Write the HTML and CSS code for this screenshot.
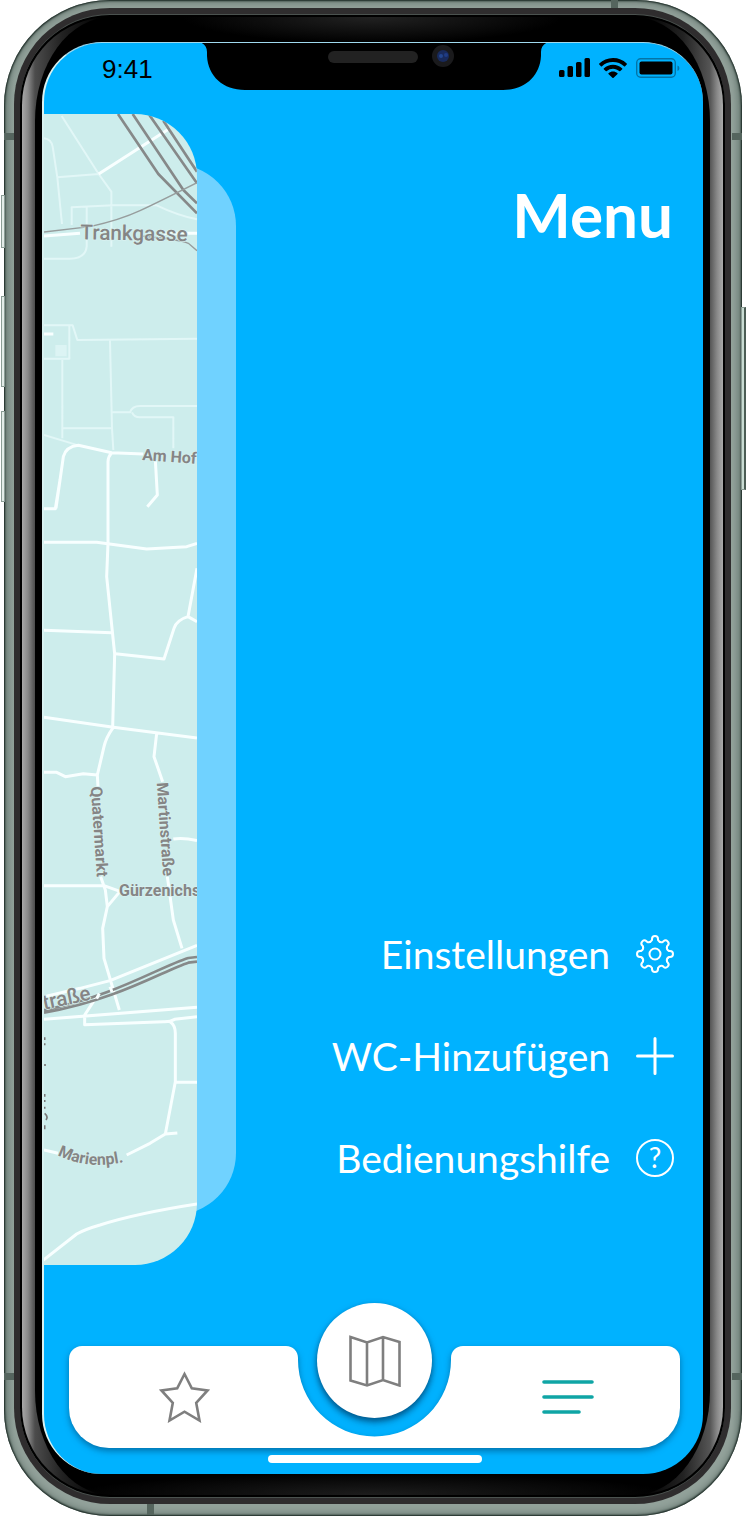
FILE: index.html
```html
<!DOCTYPE html>
<html lang="de">
<head>
<meta charset="utf-8">
<meta name="viewport" content="width=device-width, initial-scale=1">
<title>Menu</title>
<link rel="stylesheet" href="styles.css">
</head>
<body>
<div class="phone">
  <span class="key key-mute"></span>
  <span class="key key-up"></span>
  <span class="key key-down"></span>
  <span class="key key-power"></span>
  <span class="band band-top"></span>
  <span class="band band-bottom"></span>
  <span class="band band-side band-left-high"></span>
  <span class="band band-side band-left-low"></span>
  <span class="band band-side band-right-high"></span>
  <span class="band band-side band-right-low"></span>
  <div class="rim">
    <div class="glass">
      <div class="sheen">
        <div class="bezel">
          <div class="screen">
            <header class="status">
              <time class="clock">9:41</time>
              <svg class="notch" viewBox="0 0 354 48" aria-hidden="true">
                <path d="M0 0C6 0 10 4 10 10V14C11 34 26 48 48 48H306C328 48 343 34 344 14V10C344 4 348 0 354 0Z" fill="#000"/>
                <rect x="131" y="9" width="90" height="12" rx="6" fill="#222"/>
                <circle cx="246" cy="14" r="11" fill="#1a1a1c"/>
                <circle cx="246" cy="14" r="6" fill="#182a5c"/>
                <circle cx="244" cy="14" r="2" fill="#23468f"/>
                <circle cx="249" cy="13" r="2" fill="#1f3c85"/>
              </svg>
              <div class="signals">
                <svg width="31" height="20" viewBox="0 0 31 20" aria-hidden="true"><rect x="0" y="12" width="5.500" height="7" rx="1.500"/><rect x="8.500" y="8" width="5.500" height="11" rx="1.500"/><rect x="17" y="4" width="5.500" height="15" rx="1.500"/><rect x="25.500" y="0" width="5.500" height="19" rx="1.500"/></svg>
                <svg width="28" height="20" viewBox="0 0 28 20" aria-hidden="true"><path d="M14 0C8.600 0 3.800 2.100.3 5.500a.8.800 0 0 0 0 1.100l1.600 1.600a.8.800 0 0 0 1.100 0A15.800 15.800 0 0 1 14 4c4.300 0 8.200 1.600 11 4.200a.8.800 0 0 0 1.100 0l1.600-1.600a.8.800 0 0 0 0-1.100A19.600 19.600 0 0 0 14 0ZM14 6.800c-3.500 0-6.600 1.300-9 3.500a.8.800 0 0 0 0 1.200l1.700 1.600a.8.800 0 0 0 1.100 0A9.300 9.300 0 0 1 14 10.700c2.400 0 4.600.9 6.200 2.400a.8.800 0 0 0 1.100 0l1.700-1.600a.8.800 0 0 0 0-1.200c-2.400-2.200-5.500-3.500-9-3.500ZM14 13.500c-1.700 0-3.200.6-4.300 1.600a.8.800 0 0 0 0 1.200l3.700 3.400a.9.900 0 0 0 1.200 0l3.700-3.400a.8.800 0 0 0 0-1.200c-1.100-1-2.600-1.600-4.300-1.600Z"/></svg>
                <svg width="44" height="20" viewBox="0 0 44 20" aria-hidden="true"><rect x=".7" y=".7" width="38.600" height="18.600" rx="4" fill="none" stroke="#0474a6" stroke-width="1.400"/><rect x="3.500" y="3.500" width="33" height="13" rx="2"/><path d="M41.500 7.500c2.500.8 2.500 4.700 0 5.500Z" fill="#0474a6"/></svg>
              </div>
            </header>

            <main class="content">
              <div class="peek">
                <div class="layer"></div>
                <svg class="map" viewBox="42 42 459 3453" role="img" aria-label="Stadtplan">
                  <g class="lane">
                    <path d="M95 48L206 222L244 275V440M82 232L206 222M42 115Q64 118 68 140L82 232L96 372M125 375V322L250 316H380Q440 345 501 358M170 320V440Q166 476 120 476H42M42 676H128L142 720L501 716M118 676V776H42M97 780V1015M240 722L246 985L250 1050M100 985H246M246 937H300Q306 918 330 918H501M306 937Q312 952 330 952H430V1045M42 1005L145 1036"/>
                  </g>
                  <rect class="block" x="76" y="735" width="34" height="34"/>
                  <g class="road">
                    <path d="M206 222L420 85M42 408L150 400M400 400H501M42 702H70M78 1225L100 1070Q108 1040 145 1036L245 1058L340 1062M245 1058Q234 1070 234 1085V1330L230 1430L254 1662L248 1880M376 1080L382 1185L352 1220M42 1226H76L90 1140"/>
                    <g transform="translate(0 1140)">
                      <path d="M42 187H200L350 207L470 200L501 190M501 265L474 410Q440 420 432 445L402 537L256 521M474 410L501 425M42 451L245 458M42 712L250 742L501 774M250 742Q228 772 222 800L202 885L204 920M42 877H80L106 890L160 881L202 885M380 760L372 830L398 905M430 1077Q460 1072 501 1082"/>
                    </g>
                    <g transform="translate(0 2280)">
                      <path d="M42 77H222L270 94L232 140L218 205L222 295L268 450M212 50L226 90L232 140M412 50L430 180L456 265M42 410L150 385L240 362L501 256M42 478L501 442M200 410L164 465V494L400 485Q420 486 434 478L501 470M420 485Q436 495 436 520V665L406 822L360 850L290 885M436 667H501M406 822L442 819M42 870L84 880M30 1208L140 1122Q165 1108 210 1095Q320 1060 501 1032"/>
                    </g>
                  </g>
                  <g class="rail">
                    <path d="M264 42L385 222L501 340M308 42L460 270L501 310M356 42L501 250M400 62L501 215"/>
                    <path d="M42 2730C250 2690 390 2600 475 2574L501 2571M42 2738C260 2700 400 2612 475 2588L501 2585"/>
                    <path class="track" d="M42 396L180 380Q270 360 330 332T501 248M330 408Q450 418 475 430L501 452"/>
                  </g>
                  <path class="road" d="M200 2696L208 2680M240 2660L246 2676"/>
                  <g class="place">
                    <text class="place-large" transform="translate(151 418) rotate(1)">Trankgasse</text>
                    <text transform="translate(336 1080) rotate(4)">Am Hof</text>
                    <text transform="translate(182 2060) rotate(86)">Quatermarkt</text>
                    <text transform="translate(380 2048) rotate(86)">Martinstraße</text>
                    <text x="267" y="2388">Gürzenichs</text>
                    <text class="place-large" transform="translate(42 2729) rotate(-12)">traße</text>
                    <path id="marien" d="M82 3165Q180 3215 300 3181" fill="none" stroke="none"/>
                    <text><textPath href="#marien">Marienpl.</textPath></text>
                  </g>
                  <path class="speck" d="M44 2812V2820M44 2830V2836M45 2892V2898M44 2982V2990M44 3000V3006M44 3020V3026M44 3040Q56 3050 48 3060M44 3076V3088"/>
                </svg>
              </div>

              <section class="menu">
                <h1 class="title">Menu</h1>
                <nav class="actions">
                  <a class="action" href="#einstellungen">Einstellungen
                    <svg class="icon" viewBox="-19 -19 38 38" aria-hidden="true"><path d="M-3-15A3 3 0 0 1 3-15V-14Q4.600-11.100 7.780-12.020L8.490-12.730A3 3 0 0 1 12.730-8.490L12.020-7.780Q11.100-4.600 14-3H15A3 3 0 0 1 15 3H14Q11.100 4.600 12.020 7.780L12.730 8.490A3 3 0 0 1 8.490 12.730L7.780 12.020Q4.600 11.100 3 14V15A3 3 0 0 1-3 15V14Q-4.600 11.100-7.780 12.020L-8.490 12.730A3 3 0 0 1-12.730 8.490L-12.020 7.780Q-11.100 4.600-14 3H-15A3 3 0 0 1-15-3H-14Q-11.100-4.600-12.020-7.780L-12.730-8.490A3 3 0 0 1-8.490-12.730L-7.780-12.020Q-4.600-11.100-3-14Z"/><circle r="5.500"/></svg>
                  </a>
                  <a class="action" href="#hinzufuegen">WC-Hinzufügen
                    <svg class="icon icon-plus" viewBox="-19 -19 38 38" aria-hidden="true"><path d="M0-17.500V17.500M-17.500 0H17.500"/></svg>
                  </a>
                  <a class="action" href="#hilfe">Bedienungshilfe
                    <svg class="icon" viewBox="-19 -19 38 38" aria-hidden="true"><circle r="18"/><text class="mark" x="0" y="10">?</text></svg>
                  </a>
                </nav>
              </section>
            </main>

            <nav class="tabs" aria-label="Navigation">
              <button class="tab tab-favorites" type="button" aria-label="Favoriten">
                <svg width="51" height="52" viewBox="0 0 51 52" fill="none" stroke="#7f7f7f" stroke-width="2.600" aria-hidden="true"><path d="M25.500 3L32.800 17.300L48.500 19.500L37.200 31.800L40.500 49.500L25.500 40.700L10.500 49.500L13.800 31.800L2.500 19.500L18.200 17.300Z"/></svg>
              </button>
              <svg class="cradle" viewBox="0 0 181 102" aria-hidden="true"><path d="M0 0H2C9 0 14 5 14 12V14A76.500 76.500 0 0 0 167 14V12C167 5 172 0 179 0H181V102H0Z" fill="#fff"/></svg>
              <button class="fab" type="button" aria-label="Karte">
                <svg width="52" height="52" viewBox="0 0 52 52" fill="none" stroke="#7f7f7f" stroke-width="2.600" aria-hidden="true"><path d="M1.500 2L18 7.500L34 2L50.500 7V50.500L34 45L18 50.500L1.500 45.500ZM18 7.500V50.500M34 2V45"/></svg>
              </button>
              <button class="tab tab-menu" type="button" aria-label="Menu">
                <svg width="52" height="36" viewBox="0 0 52 36" fill="none" stroke="#0fa5a5" stroke-width="3.600" stroke-linecap="round" aria-hidden="true"><path d="M2 3H50M2 18H50M2 33H37"/></svg>
              </button>
            </nav>
            <div class="home"></div>
          </div>
        </div>
      </div>
    </div>
  </div>
</div>
</body>
</html>
```
FILE: styles.css
```css
* {
  box-sizing: border-box;
}

body {
  margin: 0;
  padding: 0 6px 2px 4px;
  background: #fff;
  font-family: Lato, "Open Sans", sans-serif;
}

/* Device frame, from the metal edge inwards */
.phone {
  position: relative;
  padding: 8px 11px 12px 10px;
  border-radius: 106px;
  background: linear-gradient(90deg, #82938c, #93a29b 10px, #93a29b calc(100% - 10px), #82938c);
  box-shadow: inset 0 0 2px 1px #16241f, inset 0 0 8px 1px #5a6b64;
}

.rim {
  padding: 6px;
  border-radius: 96px;
  background: #2f2d2e;
}

.glass {
  padding: 2px;
  border: 1px solid #4b524f;
  border-width: 1px 0;
  border-radius: 90px;
  background: #000;
}

.sheen {
  border-radius: 88px;
  background: linear-gradient(90deg, #a8a8a8, #888 6px, #4c4c4c 13px, #222 40px, #000 80px, #000 calc(100% - 80px), #222 calc(100% - 40px), #555 calc(100% - 13px), #888 calc(100% - 6px), #aaa);
}

.bezel {
  margin: 0 13px;
  padding: 25px 7px 21px;
  border-radius: 76px / 104px;
  background:
    radial-gradient(ellipse 190px 26px at 50% 0, #222, transparent),
    radial-gradient(ellipse 300px 22px at 50% 100%, #1d1d1d, transparent),
    #000;
}

.key {
  position: absolute;
  left: -3px;
  width: 4px;
  border: 1px solid #8b9d95;
  background: #e3ece8;
}

.key-mute {
  top: 195px;
  height: 53px;
}

.key-up {
  top: 296px;
  height: 91px;
}

.key-down {
  top: 411px;
  height: 91px;
}

.key-power {
  top: 307px;
  right: -4px;
  left: auto;
  width: 5px;
  height: 183px;
  border-right: 2px solid #4c5d55;
  background: #c9dcd3;
}

.band {
  position: absolute;
  width: 7px;
  height: 8px;
  background: #55655e;
}

.band-top {
  top: 0;
  right: 124px;
}

.band-bottom {
  bottom: 1px;
  left: 143px;
  height: 11px;
}

.band-side {
  width: 10px;
  height: 7px;
}

.band-left-high {
  top: 133px;
  left: 0;
}

.band-left-low {
  bottom: 136px;
  left: 0;
}

.band-right-high {
  top: 133px;
  right: 0;
}

.band-right-low {
  right: 0;
  bottom: 136px;
}

/* Screen */
.screen {
  display: flex;
  flex-direction: column;
  padding-bottom: 11px;
  overflow: hidden;
  border-left: 2px solid #d9f2f1;
  border-top: 1px solid #9fd9ee;
  border-radius: 60px;
  background: #00b2ff;
}

.status {
  display: grid;
  grid-template-columns: 1fr 354px 1fr;
  height: 71px;
  align-items: start;
}

.clock {
  padding-top: 10px;
  padding-left: 58px;
  font: 26px/32px "Liberation Sans", Arial, sans-serif;
}

.notch {
  width: 354px;
  height: 48px;
  margin-top: -1px;
}

.signals {
  display: flex;
  justify-content: flex-end;
  gap: 9px;
  padding-top: 15px;
  padding-right: 23px;
}

.content {
  display: grid;
  grid-template-columns: 192px 1fr;
}

.peek {
  display: grid;
}

.layer {
  grid-area: 1 / 1;
  margin: 50px 0;
  border-radius: 0 62px 62px 0;
  background: #70d2ff;
}

.map {
  grid-area: 1 / 1;
  position: relative;
  display: block;
  width: 153px;
  height: auto;
  border-radius: 0 62px 62px 0;
  background: #cdedec;
}

.lane,
.road,
.rail,
.speck {
  fill: none;
  stroke-linejoin: round;
}

.lane {
  stroke: #e2f7f7;
  stroke-width: 6px;
}

.road {
  stroke: #f8ffff;
  stroke-width: 9px;
}

.block {
  fill: #dcf4f4;
}

.rail {
  stroke: #868989;
  stroke-width: 8px;
}

.track {
  stroke: #979d9d;
  stroke-width: 4px;
}

.speck {
  stroke: #777;
  stroke-width: 5px;
}

.place {
  fill: #858585;
  stroke: #d9f1f0;
  stroke-width: 4px;
  paint-order: stroke;
  font-family: Roboto, sans-serif;
  font-size: 48px;
  font-weight: 700;
}

.place-large {
  font-size: 62px;
  font-weight: 500;
}

.menu {
  display: flex;
  flex-direction: column;
  justify-content: space-between;
  padding: 68px 29px 87px 0;
  color: #fff;
}

.title {
  margin: 0;
  padding-right: 1px;
  font-size: 62px;
  font-weight: 700;
  line-height: 64px;
  text-align: right;
}

.actions {
  display: flex;
  flex-direction: column;
  gap: 62px;
}

.action {
  display: flex;
  align-items: center;
  justify-content: flex-end;
  gap: 26px;
  color: #fff;
  font-size: 39px;
  line-height: 40px;
  text-decoration: none;
}

.icon {
  flex: none;
  width: 38px;
  height: 38px;
  fill: none;
  stroke: #fff;
  stroke-width: 2px;
  stroke-linecap: round;
}

.icon-plus {
  stroke-width: 3px;
}

.mark {
  fill: #fff;
  stroke: none;
  font-size: 28px;
  text-anchor: middle;
}

/* Bottom bar: two wings joined by the cradle of the round button */
.tabs {
  display: grid;
  grid-template-columns: 1fr 181px 1fr;
  margin: 81px 23px 0 25px;
  filter: drop-shadow(0 3px 3px rgba(0, 50, 90, .5));
}

.tab {
  display: flex;
  align-items: center;
  justify-content: center;
  border: 0;
  background: #fff;
}

.tab-favorites {
  padding: 0 0 0 16px;
  border-radius: 13px 0 0 40px;
}

.tab-menu {
  padding: 0 10px 0 0;
  border-radius: 0 13px 40px 0;
}

.cradle {
  grid-area: 1 / 2;
  width: 181px;
  height: 102px;
}

.fab {
  grid-area: 1 / 2;
  position: relative;
  display: grid;
  place-items: center;
  justify-self: center;
  width: 115px;
  height: 115px;
  margin: -43px 0 0;
  padding: 0;
  border: 0;
  border-radius: 50%;
  background: #fff;
  box-shadow: 0 3px 5px rgba(0, 50, 90, .4);
}

.home {
  align-self: center;
  width: 214px;
  height: 8px;
  margin: 7px 0 0 2px;
  border-radius: 4px;
  background: #fff;
  position: relative;
}
```
